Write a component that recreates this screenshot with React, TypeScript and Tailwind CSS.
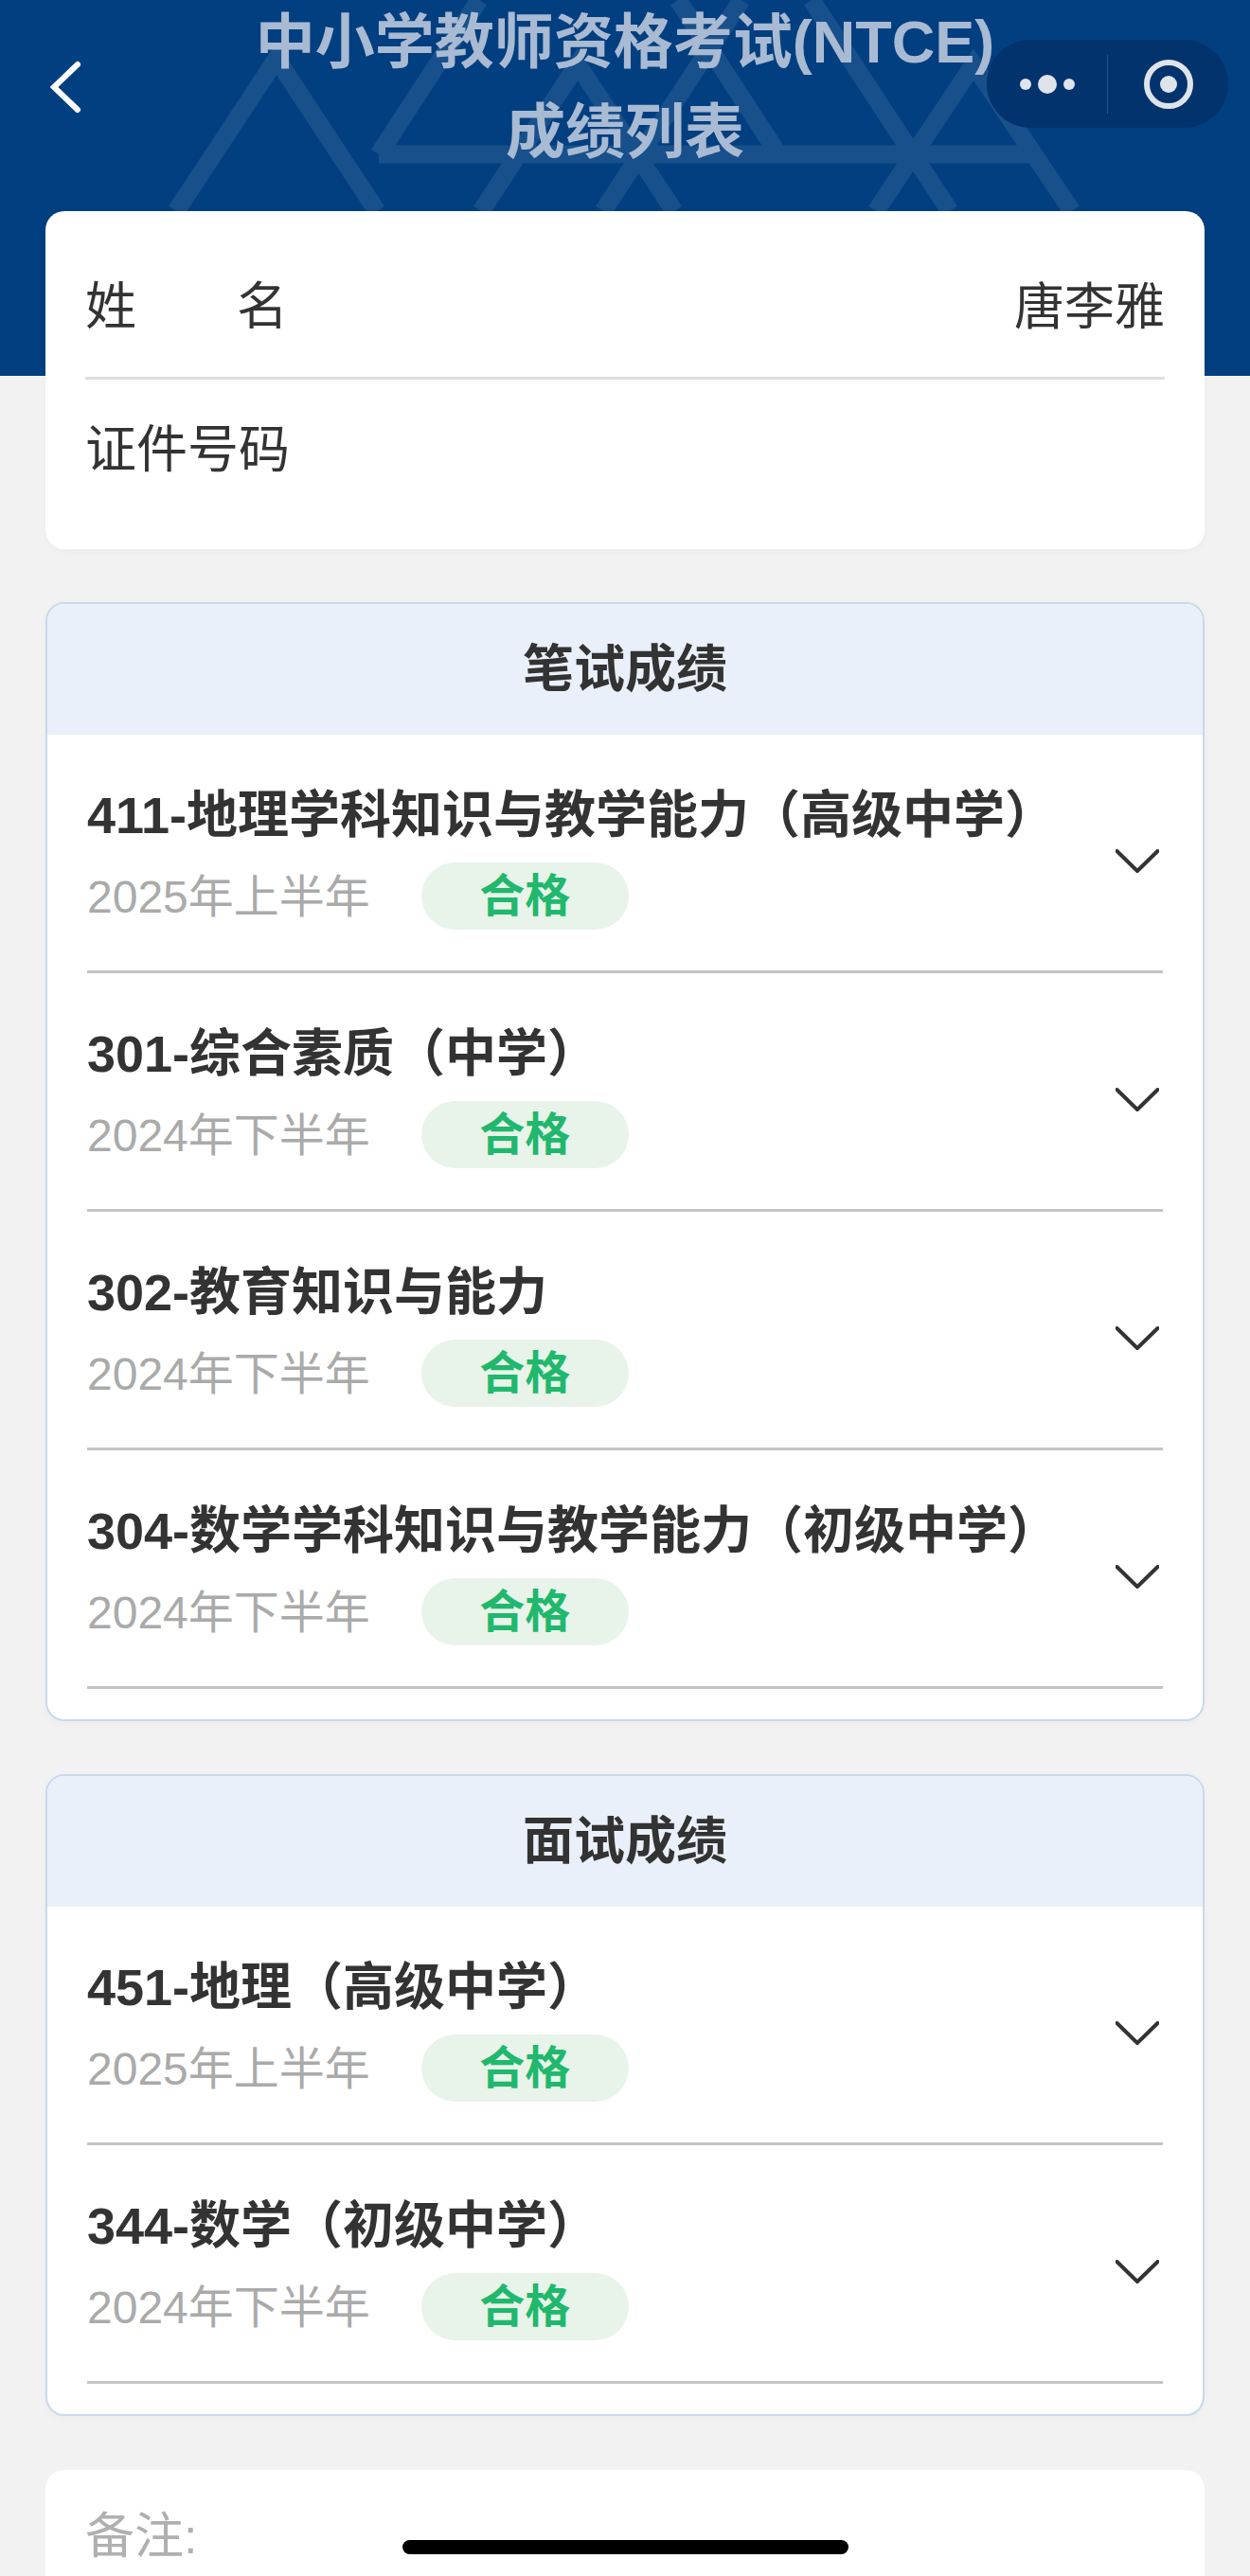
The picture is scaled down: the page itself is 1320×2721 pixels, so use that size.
// --- Types ---
interface Score {
  title: string;
  term: string;
}

// --- Data ---
const writtenScores: Score[] = [
  { title: '411-地理学科知识与教学能力（高级中学）', term: '2025年上半年' },
  { title: '301-综合素质（中学）', term: '2024年下半年' },
  { title: '302-教育知识与能力', term: '2024年下半年' },
  { title: '304-数学学科知识与教学能力（初级中学）', term: '2024年下半年' },
];

const interviewScores: Score[] = [
  { title: '451-地理（高级中学）', term: '2025年上半年' },
  { title: '344-数学（初级中学）', term: '2024年下半年' },
];

export default function App() {
  return (
    <div className="relative h-[2721px] overflow-hidden bg-[#f2f2f2] font-['Liberation_Sans','Noto_Sans_CJK_SC',sans-serif]">
      {/* Blue header */}
      <header className="relative h-[397px] overflow-hidden bg-[#023f80]">
        <svg className="absolute inset-0 h-full w-full" viewBox="0 0 1320 397" fill="none">
          <path
            d="M186 223 L292 62 L398 223 M508 223 L610 68 L712 223 M925 223 L1028 68 L1132 223 M400 163 L506 0 M716 0 L822 163 M400 163 H1095 M783 0 L637 223 M857 0 L1003 223"
            stroke="#ffffff"
            strokeOpacity="0.09"
            strokeWidth="19"
            strokeLinejoin="miter"
          />
        </svg>

        <div className="relative -mt-[3px] flex flex-col items-center text-[63px] font-bold leading-[95px] text-[#a9bad3]">
          <span>中小学教师资格考试(NTCE)</span>
          <span>成绩列表</span>
        </div>

        <svg className="absolute left-[50px] top-[62px]" width="38" height="60" viewBox="0 0 38 60" fill="none">
          <path d="M32 6 L7 30 L32 54" stroke="#ffffff" strokeWidth="6" strokeLinecap="round" strokeLinejoin="miter" />
        </svg>

        {/* Mini program capsule */}
        <div className="absolute left-[1042px] top-[42px] flex h-[93px] w-[255px] items-center rounded-full bg-[#03336d]">
          <div className="flex h-[62px] w-[128px] items-center justify-center gap-[7px] border-r border-[#2b5288]">
            <span className="h-[12px] w-[12px] rounded-full bg-[#dfe3ea]" />
            <span className="h-[20px] w-[20px] rounded-full bg-[#dfe3ea]" />
            <span className="h-[12px] w-[12px] rounded-full bg-[#dfe3ea]" />
          </div>
          <div className="flex flex-1 items-center justify-center">
            <span className="flex h-[52px] w-[52px] items-center justify-center rounded-full border-[6px] border-[#dfe3ea]">
              <span className="h-[18px] w-[18px] rounded-full bg-[#dfe3ea]" />
            </span>
          </div>
        </div>
      </header>

      <main className="relative -mt-[174px] flex flex-col gap-[56px] px-[48px]">
        {/* Candidate card */}
        <section className="h-[357px] rounded-[20px] bg-white px-[42px] text-[54px] text-[#333333] shadow-[0_2px_10px_rgba(0,0,0,0.03)]">
          <div className="flex h-[178px] items-center justify-between border-b-[3px] border-[#dedede] pt-[28px]">
            <span className="flex w-[214px] justify-between">
              <span>姓</span>
              <span>名</span>
            </span>
            <span className="text-[53px]">唐李雅</span>
          </div>
          <div className="pt-[41px] leading-[66px]">证件号码</div>
        </section>

        <ScoreSection title="笔试成绩" scores={writtenScores} />
        <ScoreSection title="面试成绩" scores={interviewScores} />

        {/* Remarks */}
        <section className="mt-px h-[200px] rounded-[20px] bg-white px-[42px] pt-[40px] text-[52px] leading-[60px] text-[#b0b0b0]">
          备注:
        </section>
      </main>

      <div className="absolute left-[425px] top-[2683px] h-[15px] w-[471px] rounded-full bg-black" />
    </div>
  );
}

function ScoreSection({ title, scores }: { title: string; scores: Score[] }) {
  return (
    <section className="overflow-hidden rounded-[20px] border-2 border-[#c9d9ec] bg-white pb-[32px] shadow-[0_2px_10px_rgba(0,0,0,0.03)]">
      <h2 className="flex h-[138px] items-center justify-center bg-[#e9f0f9] text-[54px] font-bold text-[#333333]">
        {title}
      </h2>
      <div className="px-[42px]">
        {scores.map((score) => (
          <ScoreRow key={score.title} score={score} />
        ))}
      </div>
    </section>
  );
}

function ScoreRow({ score }: { score: Score }) {
  return (
    <div className="flex items-center justify-between border-b-[3px] border-[#c4c4c4] pb-[43px] pt-[48px]">
      <div>
        <div className="relative top-[2px] whitespace-nowrap text-[54px] font-bold leading-[70px] text-[#333333]">{score.title}</div>
        <div className="mt-[17px] flex items-center">
          <span className="relative top-px text-[48px] leading-[71px] text-[#aaaaaa]">{score.term}</span>
          <span className="ml-[54px] flex h-[71px] w-[219px] items-center justify-center rounded-full bg-[#e8f3e9] text-[48px] font-bold text-[#1fb86d]">
            合格
          </span>
        </div>
      </div>
      <svg className="mr-[4px] mt-[14px] shrink-0" width="46" height="26" viewBox="0 0 46 26" fill="none">
        <path d="M1.5 2 L23 23 L44.5 2" stroke="#333333" strokeWidth="4" strokeLinecap="round" strokeLinejoin="round" />
      </svg>
    </div>
  );
}
